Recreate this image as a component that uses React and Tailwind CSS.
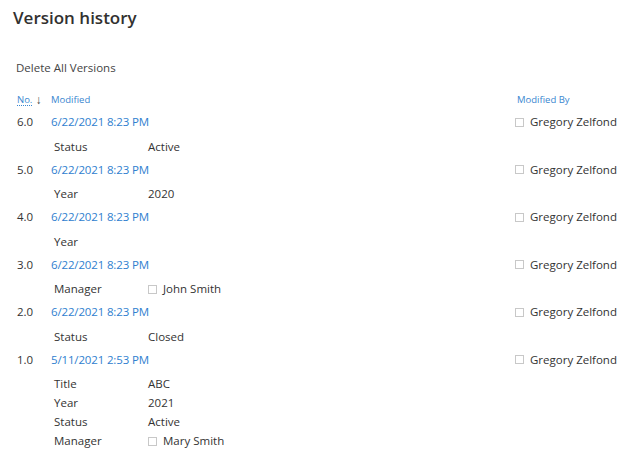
import React from "react";

const versions = [
  { no: "6.0", date: "6/22/2021 8:23 PM", fields: [["Status", "Active"]] },
  { no: "5.0", date: "6/22/2021 8:23 PM", fields: [["Year", "2020"]] },
  { no: "4.0", date: "6/22/2021 8:23 PM", fields: [["Year", ""]] },
  { no: "3.0", date: "6/22/2021 8:23 PM", fields: [["Manager", "John Smith", true]] },
  { no: "2.0", date: "6/22/2021 8:23 PM", fields: [["Status", "Closed"]] },
  {
    no: "1.0",
    date: "5/11/2021 2:53 PM",
    fields: [
      ["Title", "ABC"],
      ["Year", "2021"],
      ["Status", "Active"],
      ["Manager", "Mary Smith", true],
    ],
  },
];

function Box() {
  return <span className="inline-block w-[9px] h-[9px] border border-[#c8c8c8] bg-white shrink-0" />;
}

export default function App() {
  return (
    <div
      className="w-[634px] h-[459px] bg-white text-[#333333] overflow-hidden"
      style={{ fontFamily: '"Open Sans", "Noto Sans", sans-serif' }}
    >
      <div className="pl-[13px] pt-[7px] h-[28px] flex items-center">
        <h1 className="text-[17px] font-semibold text-[#323130] leading-none">Version history</h1>
      </div>
      <div className="pl-[16px] mt-[34px] h-[12px] flex items-center text-[11.5px] text-[#444]">
        Delete All Versions
      </div>
      <div className="mt-[16px] h-[20px] flex items-center text-[9.5px] text-[#3a87d0]">
        <div className="w-[51px] pl-[17px] flex items-center gap-[3px]">
          <span className="underline decoration-dotted underline-offset-2">No.</span>
          <span className="text-[#444] text-[12px] leading-none">↓</span>
        </div>
        <div className="flex-1">Modified</div>
        <div className="w-[117px]">Modified By</div>
      </div>
      <div>
        {versions.map((v) => (
          <div key={v.no} className="pb-[1.5px]">
            <div className="h-[24px] flex items-center text-[11.5px]">
              <div className="w-[51px] pl-[17px]">{v.no}</div>
              <div className="flex-1 text-[#2f80cf] tracking-[-0.15px]">{v.date}</div>
              <div className="w-[119px] flex items-center gap-[6px]">
                <Box />
                <span>Gregory Zelfond</span>
              </div>
            </div>
            <div className="pt-[3px]">
              {v.fields.map(([k, val, person]) => (
                <div key={k} className="h-[19px] flex items-center text-[11.5px]">
                  <div className="pl-[54px] w-[148px]">{k}</div>
                  <div className="flex items-center gap-[6px]">
                    {person && <Box />}
                    <span>{val}</span>
                  </div>
                </div>
              ))}
            </div>
          </div>
        ))}
      </div>
    </div>
  );
}
